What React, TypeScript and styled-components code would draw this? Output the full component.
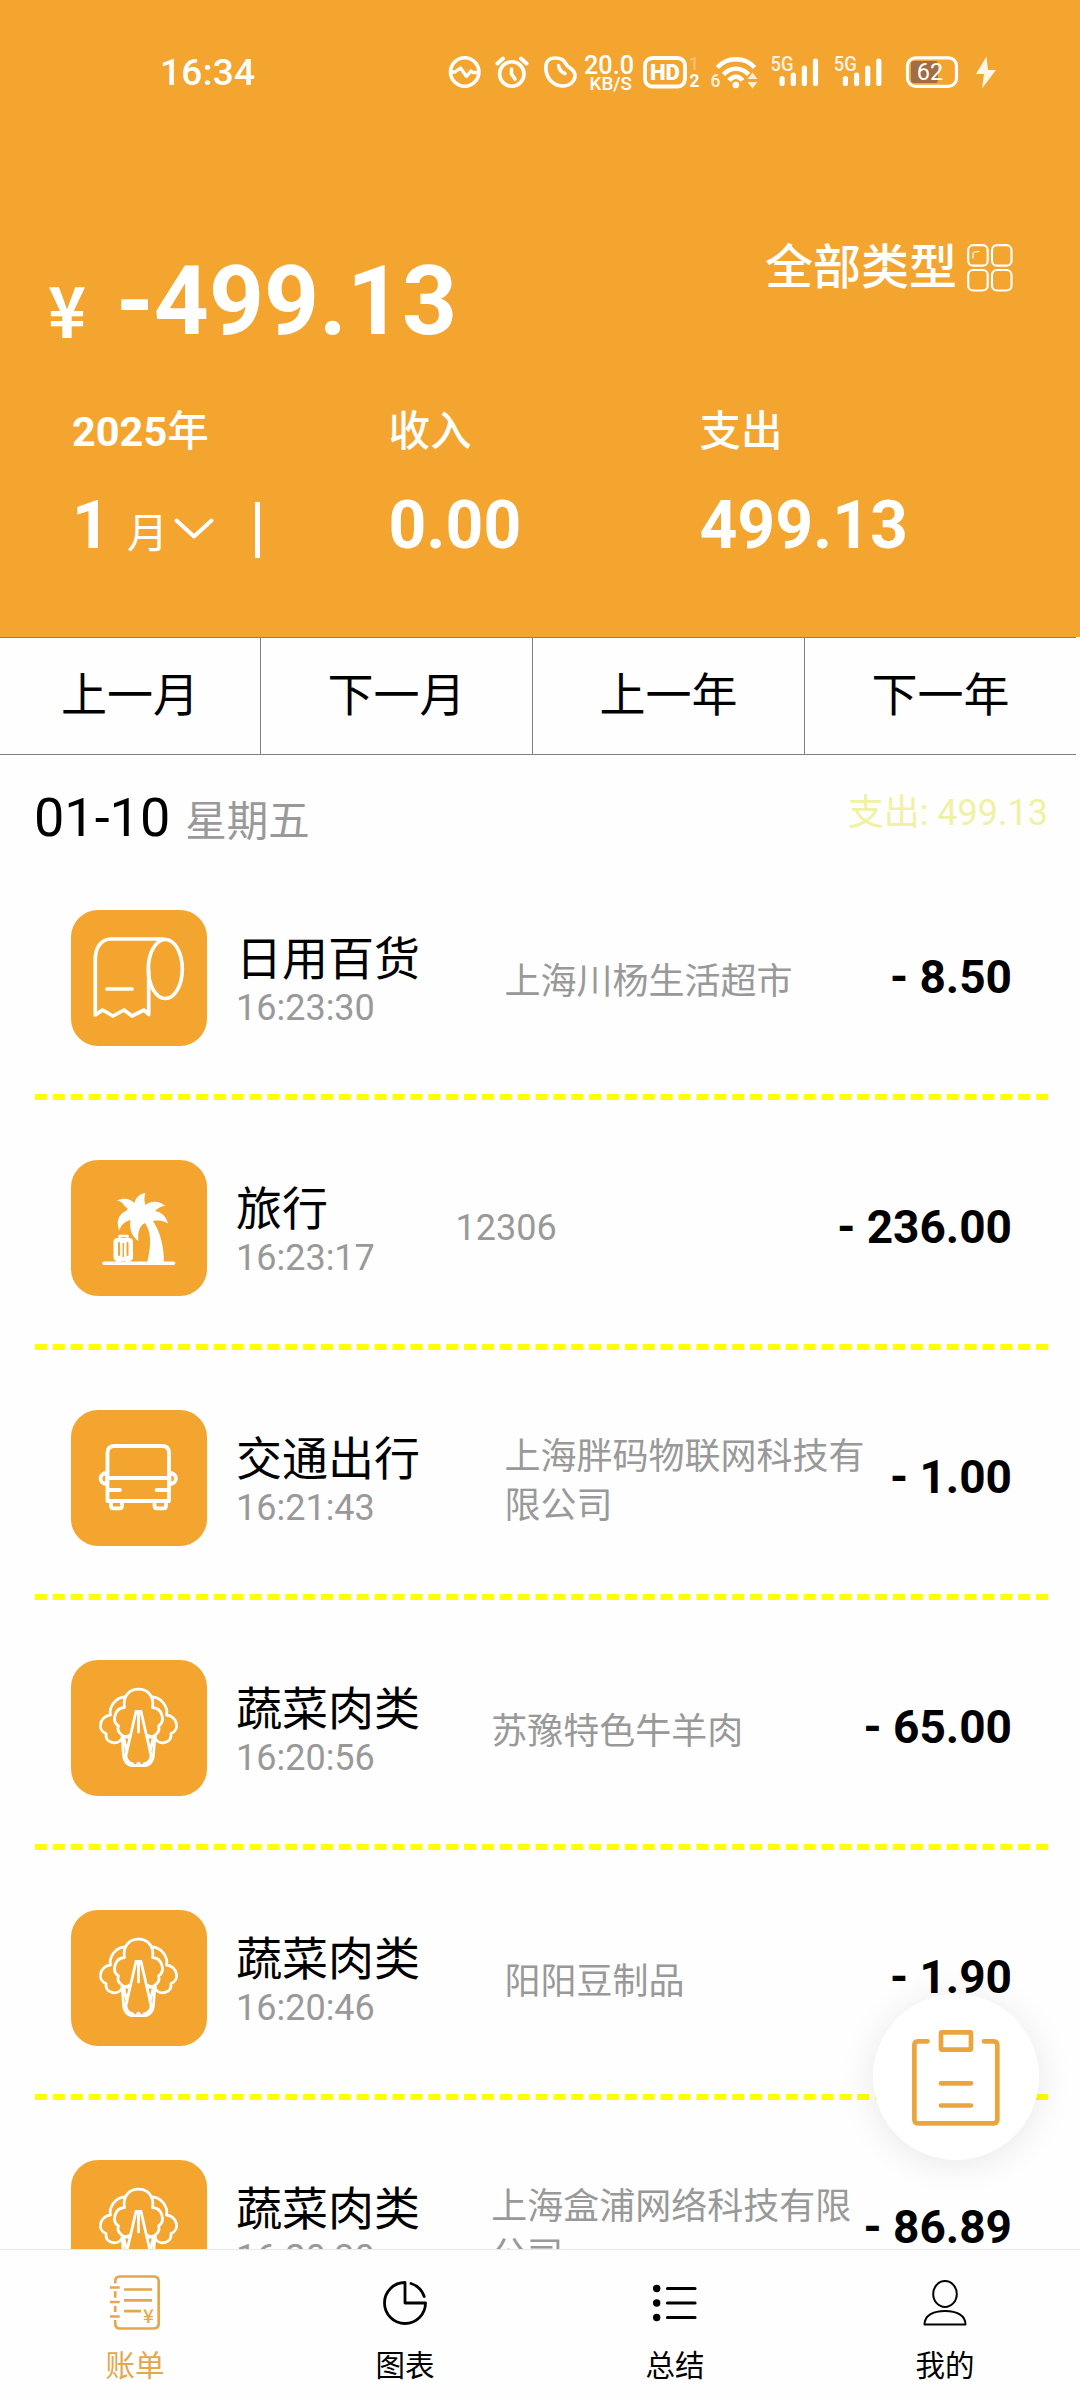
import React from "react";
import styled, { createGlobalStyle } from "styled-components";

const ORANGE = "#f4a52f";
const FONT = `Roboto, "Noto Sans CJK SC", sans-serif`;

const GlobalStyle = createGlobalStyle`
  * { box-sizing: border-box; }
  body { margin: 0; background: #fefefe; }
`;

const Screen = styled.div`
  width: 1080px;
  height: 2400px;
  display: flex;
  flex-direction: column;
  overflow: hidden;
  background: #fefefe;
  color: #000;
  font-family: ${FONT};
  position: relative;
`;

const Header = styled.header`
  height: 637px;
  flex: none;
  background: ${ORANGE};
  color: #fff;
`;

const StatusBar = styled.div`
  height: 144px;
  display: flex;
  align-items: center;
  padding: 0 84px 0 160px;
`;

const Clock = styled.span`
  flex: 1;
  padding-top: 1px;
  font-size: 37px;
  line-height: 40px;
  letter-spacing: 0.3px;
  font-weight: 500;
`;

const StatusIcons = styled.svg`
  display: block;
  width: 556px;
  height: 60px;
  font-family: ${FONT};
`;

const TopRow = styled.div`
  height: 260px;
  padding: 96px 67px 0 48px;
  display: flex;
  justify-content: space-between;
  align-items: flex-start;
`;

const Balance = styled.div`
  display: flex;
  align-items: flex-start;
  padding-top: 5px;
  font-weight: 700;
`;

const Currency = styled.span`
  width: 68px;
  padding-top: 13px;
  font-family: "Noto Sans CJK SC", sans-serif;
  font-size: 70px;
  line-height: 100px;
  transform: scaleX(0.92);
  transform-origin: left;
`;

const BalanceValue = styled.span`
  font-size: 96px;
  line-height: 112px;
`;

const TypeFilter = styled.div`
  display: flex;
  align-items: center;
  gap: 10px;
  font-size: 48px;
  line-height: 56px;
  font-weight: 500;
`;

const Stats = styled.div`
  display: grid;
  grid-template-columns: 316.5px 311px 1fr;
  padding-left: 72px;
`;

const Stat = styled.div`
  display: flex;
  flex-direction: column;
  gap: 26px;
`;

const StatLabel = styled.div<{ $bold?: boolean }>`
  font-size: 41.5px;
  line-height: 56px;
  font-weight: ${(p) => (p.$bold ? 700 : 500)};
`;

const Medium = styled.span`
  font-weight: 500;
`;

const StatValue = styled.div`
  display: flex;
  align-items: baseline;
  font-size: 66px;
  line-height: 80px;
  font-weight: 700;
`;

const MonthUnit = styled.span`
  margin-left: 17px;
  margin-right: 6px;
  font-size: 41px;
  font-weight: 400;
`;

const ChevronIcon = styled.svg`
  width: 40px;
  height: 24px;
  align-self: center;
  margin-bottom: 2px;
`;

const Divider = styled.i`
  width: 5px;
  height: 56px;
  margin-left: 41px;
  align-self: center;
  margin-bottom: 1px;
  background: #fff;
`;

const PeriodNav = styled.nav`
  width: 1076px;
  height: 118px;
  flex: none;
  display: grid;
  grid-template-columns: 261px 272px 272px 271px;
  border-top: 1px solid #808080;
  border-bottom: 1px solid #808080;
`;

const PeriodButton = styled.button`
  border: 0;
  border-right: 1px solid #808080;
  background: transparent;
  padding: 0 0 3px;
  color: #000;
  font-family: ${FONT};
  font-size: 46px;
  line-height: 56px;
  &:last-child { border-right: 0; }
`;

const DayHeader = styled.div`
  height: 95px;
  flex: none;
  padding: 31px 32px 0 34px;
  display: flex;
  justify-content: space-between;
  align-items: flex-start;
`;

const DayDate = styled.div`
  display: flex;
  align-items: baseline;
  gap: 15px;
  font-size: 54px;
  line-height: 64px;
`;

const Weekday = styled.span`
  font-size: 41.5px;
  color: #999;
`;

const DayTotal = styled.div`
  margin-top: 6px;
  font-size: 36px;
  line-height: 42px;
  color: #f1f1a3;
`;

const List = styled.div`
  flex: 1;
  min-height: 0;
  overflow: hidden;
  padding: 0 32px 0 35px;
`;

const Row = styled.div`
  height: 250px;
  padding: 60px 36px 48px;
  display: flex;
  justify-content: space-between;
  align-items: center;
  border-bottom: 6px dashed #ff0;
`;

const RowLead = styled.div`
  display: flex;
  align-items: center;
  padding-right: 59px;
`;

const Tile = styled.div`
  width: 136px;
  height: 136px;
  border-radius: 27px;
  background: ${ORANGE};
  margin-right: 29px;
  svg { display: block; }
`;

const Caption = styled.div`
  padding-top: 5px;
`;

const Title = styled.div`
  font-size: 46px;
  line-height: 54px;
  padding-bottom: 1px;
  white-space: nowrap;
`;

const Time = styled.div`
  font-size: 36px;
  line-height: 42px;
  color: #999;
`;

const Merchant = styled.div<{ $latin: boolean }>`
  width: 360px;
  flex: none;
  padding-top: ${(p) => (p.$latin ? 0 : 8)}px;
  font-size: 36px;
  line-height: 49px;
  color: #999;
  word-break: break-all;
`;

const Amount = styled.div`
  padding-bottom: 2px;
  font-size: 46px;
  line-height: 54px;
  font-weight: 700;
  white-space: nowrap;
`;

const Fab = styled.button`
  position: absolute;
  left: 873px;
  top: 1994px;
  width: 166px;
  height: 166px;
  padding: 0;
  border: 0;
  border-radius: 50%;
  background: #fff;
  box-shadow: 0 4px 36px rgba(0, 0, 0, 0.09);
  svg { display: block; }
`;

const TabBar = styled.nav`
  height: 151px;
  flex: none;
  display: grid;
  grid-template-columns: repeat(4, 1fr);
  border-top: 1px solid #e8e8e8;
  background: #fefefe;
`;

const Tab = styled.div<{ $active?: boolean }>`
  display: flex;
  flex-direction: column;
  align-items: center;
  padding-top: 23px;
  color: ${(p) => (p.$active ? "#e6a64a" : "#000")};
  font-size: 29.5px;
  line-height: 36px;
`;

const TabIcon = styled.div`
  height: 60px;
  display: flex;
  align-items: center;
  margin-bottom: 15px;
`;

const stroke = (width: number, color = "#fff") => ({
  fill: "none",
  stroke: color,
  strokeWidth: width,
  strokeLinecap: "round" as const,
  strokeLinejoin: "round" as const,
});

const Signal = ({ x }: { x: number }) => (
  <g transform={`translate(${x} 0)`}>
    <text x="0" y="18.5" fontSize="20" fontWeight="500" textLength="23" lengthAdjust="spacingAndGlyphs" opacity=".85">5G</text>
    <g {...stroke(5.2)}>
      <path d="M11.6 26.5V31.5M22.8 23V31.5M33.9 16V31.5M45 9V31.5" />
    </g>
  </g>
);

// Network, alarm, speed, signal and battery indicators.
const StatusDrawing = () => (
  <StatusIcons viewBox="0 -10 556 60" fill="#fff">
    <g {...stroke(3.6)}>
      <circle cx="24.7" cy="20" r="14.2" />
      <path d="M11 20H15L20.5 16L26.5 24.5L31 19L33 20.5H38" strokeWidth="3.3" />
      <circle cx="71.8" cy="22" r="12.2" />
      <path d="M57.5 11.5L63 6.5M86.5 11.5L81 6.5" strokeWidth="4" />
      <path d="M71.5 17V22L75 27" />
      <path d="M114 6C107 6.500 105 12 106 19C108 28 114 33.500 122 34C130 34.500 135 29 135 23.500C135 18 131 17 127.500 14C124.500 11 124.500 5.500 114 6Z" />
      <path d="M118.500 13.500C119 17 121 20 125 21.500" />
    </g>
    <text x="144" y="21.800" fontSize="25" fontWeight="500" textLength="50" lengthAdjust="spacingAndGlyphs">20.0</text>
    <text x="149.500" y="38.300" fontSize="18" fontWeight="500" textLength="42.500" lengthAdjust="spacingAndGlyphs">KB/S</text>
    <rect x="205" y="6" width="40" height="28.500" rx="7.500" {...stroke(3.800)} />
    <text x="210" y="28.200" fontSize="22.500" fontWeight="900" textLength="30" lengthAdjust="spacingAndGlyphs">HD</text>
    <text x="249" y="17.500" fontSize="17.500" fontWeight="500" opacity=".3">1</text>
    <text x="249.500" y="35" fontSize="17.500" fontWeight="700">2</text>
    <text x="270.500" y="35" fontSize="17.500" fontWeight="500" opacity=".85">6</text>
    <g {...stroke(4.600)} strokeLinecap="butt">
      <path d="M277.500 15.500C287 4.500 305 4.500 314.500 15.500" />
      <path d="M283.500 22.500C290 14.800 302 14.800 308.500 22.500" />
      <path d="M289 28.500C293 23.500 299 23.500 302.500 28.500" />
    </g>
    <circle cx="295.800" cy="33" r="3.300" />
    <path d="M307.500 27L312.500 20.500L317.500 27ZM307.500 30L312.500 36.500L317.500 30Z" opacity=".8" />
    <Signal x={330.5} />
    <Signal x={393.8} />
    <rect x="471" y="9" width="27" height="22" rx="3" fill="#a36c42" />
    <rect x="467.500" y="5.800" width="49" height="28.500" rx="8" {...stroke(3.200)} />
    <text x="490" y="28.300" fontSize="23.500" textAnchor="middle">62</text>
    <path d="M546.500 4.500L536 22H544L542 36.500L556 18H548Z" opacity=".9" />
  </StatusIcons>
);

const GridIcon = () => (
  <svg width="46" height="48" viewBox="0 0 46 48" {...stroke(2.2)}>
    <rect x="1.200" y="1.200" width="19.500" height="20.500" rx="5" />
    <rect x="25" y="1.200" width="19.500" height="20.500" rx="5" />
    <rect x="1.200" y="26" width="19.500" height="20.500" rx="5" />
    <rect x="25" y="26" width="19.500" height="20.500" rx="5" />
    <path d="M6 14V10Q6 7.500 12 7.500" strokeWidth="1.200" />
  </svg>
);

const PaperRollIcon = () => (
  <svg width="136" height="136" viewBox="0 0 136 136" {...stroke(3.700)}>
    <path d="M93 29H40C30 29 24.300 38 24.300 49V105L31.500 100L42 106L53 100L61 106L73 100L77.700 104.500V60" />
    <ellipse cx="94.300" cy="59" rx="17" ry="29.500" />
    <path d="M36 79H61" />
  </svg>
);

const TravelIcon = () => (
  <svg width="136" height="136" viewBox="0 0 136 136" fill="#fff">
    <path d="M74.500 33C68 34 64.500 38 63.500 43C58 38 52 38 46 40.500C50 41 52 43 54 46.500C58 49 57 50 53 52C46 56 45.500 64 48.500 70.500C50 65 53 62 59.500 60C58 69 61 77 67.500 81C66.500 73 68 66 74 63C82 74 79 91 76 103H93C93 88 90 73 82 61C88 60 93 61 97 63.500C95 56 90 52 84 51C87 48 90 46 94.500 46C88 40.500 80 40.500 74.500 45C73 41 73 37 74.500 33Z" />
    <path d="M33 103.300H102.500" {...stroke(3.600)} />
    <path d="M48.500 79V76H56.500V79" {...stroke(2.400)} />
    <rect x="42.500" y="78" width="19.500" height="23" rx="4" />
    <circle cx="47.500" cy="101" r="2.500" />
    <circle cx="57" cy="101" r="2.500" />
    <path d="M48 83V95M56.500 83V95" stroke={ORANGE} strokeWidth="2" strokeLinecap="round" />
    <path d="M52.300 83V97" stroke={ORANGE} strokeWidth="1.400" />
  </svg>
);

const BusIcon = () => (
  <svg width="136" height="136" viewBox="0 0 136 136" {...stroke(3.800)}>
    <path d="M36.500 91V43Q36.500 36 43.500 36H91Q98 36 98 43V91Z" />
    <path d="M36.500 68H98M38 80H49M85.500 80H97" />
    <path d="M36 63C27.500 63 27.500 74 36 74V63M98.500 63C107 63 107 74 98.500 74V63" />
    <path d="M40 92V96Q40 98.300 42.500 98.300H48.500Q51 98.300 51 96V92M83.500 92V96Q83.500 98.300 86 98.300H92.500Q95 98.300 95 96V92" />
  </svg>
);

const CabbageIcon = () => (
  <svg width="136" height="136" viewBox="0 0 136 136" {...stroke(2.800)}>
    <path d="M53.500 47.500C49 23 86 23 81.500 47.500C91 48 95 61 87.500 66C90 72 82 79 77.500 75.500M53.500 47.500C44 48 40 61 47.500 66C45 72 53 79 57.500 75.500" />
    <path d="M54 37C45 37 37.500 47 39.500 55C29 56 25.500 70 35 73.500C34 83 46 86 50.500 79M81 37C90 37 97.500 47 95.500 55C106 56 109.500 70 100 73.500C101 83 89 86 84.500 79" />
    <path d="M51 77H57.500M77.500 77H84.500M51.200 77L52.500 95C53 102 57 105.600 62 105.600H73C78 105.600 82 102 82.500 95L83.800 77" />
    <path d="M65 51.500L55 95C54.500 99 58 103.500 62 104M70 51.500L80 95C80.500 99 77 103.500 73 104M65 51.500H70M67.500 53V72M53 79L56 92M82 79L79 92" />
    <circle cx="67.500" cy="104" r=".8" />
  </svg>
);

const ClipboardIcon = () => (
  <svg width="166" height="166" viewBox="0 0 166 166" {...stroke(4.700, "#eaa63c")}>
    <path d="M54.500 47.300H45Q41.400 47.300 41.400 51V125.500Q41.400 129.300 45 129.300H120.700Q124.300 129.300 124.300 125.500V51Q124.300 47.300 120.700 47.300H111" />
    <rect x="68" y="38.300" width="30" height="17.300" rx="1" />
    <path d="M68 89.300H98M68 111.500H98" />
  </svg>
);

const LedgerTabIcon = () => (
  <svg width="50" height="56" viewBox="0 0 50 56" {...stroke(2.700, "#e6a64a")} strokeLinecap="butt">
    <path d="M5.200 8.500V6.500Q5.200 1.500 10 1.500H43.500Q48.700 1.500 48.700 6.500V48.500Q48.700 53.500 43.500 53.500H10Q5.200 53.500 5.200 48.500V45" />
    <path d="M5.200 16.300V22.700M5.200 31V37M0 12.500H9.700M0 27H9.700M0 41.500H9.700M14 14.500H42M14 25.300H42M14 36.200H31" />
    <text x="38.500" y="48.300" fontSize="19" fontWeight="500" textAnchor="middle" fill="#e6a64a" stroke="none" fontFamily='"Noto Sans CJK SC", sans-serif'>¥</text>
  </svg>
);

const ChartTabIcon = () => (
  <svg width="44" height="44" viewBox="0 0 44 44" {...stroke(2.800, "#000")}>
    <path d="M22 1.500A20.500 20.500 0 1 0 42.500 22H22Z" />
    <path d="M28 2.500A20.500 20.500 0 0 1 41.200 15.500" />
  </svg>
);

const SummaryTabIcon = () => (
  <svg width="44" height="40" viewBox="0 0 44 40" {...stroke(3.200, "#000")}>
    <path d="M14.500 5.500H42M14.500 20H42M14.500 34.500H42" />
    <g fill="#000" stroke="none">
      <circle cx="3.700" cy="5.500" r="3.700" />
      <circle cx="3.700" cy="20" r="3.700" />
      <circle cx="3.700" cy="34.500" r="3.700" />
    </g>
  </svg>
);

const ProfileTabIcon = () => (
  <svg width="44" height="46" viewBox="0 0 44 46" {...stroke(2, "#000")}>
    <ellipse cx="22" cy="14" rx="11.800" ry="13" />
    <path d="M1.500 44.500C1.500 35.500 10 31 22 31S42.500 35.500 42.500 44.500Z" />
  </svg>
);

const records = [
  { icon: <PaperRollIcon />, title: "日用百货", time: "16:23:30", merchant: "上海川杨生活超市", amount: "8.50" },
  { icon: <TravelIcon />, title: "旅行", time: "16:23:17", merchant: "12306", amount: "236.00" },
  { icon: <BusIcon />, title: "交通出行", time: "16:21:43", merchant: "上海胖码物联网科技有限公司", amount: "1.00" },
  { icon: <CabbageIcon />, title: "蔬菜肉类", time: "16:20:56", merchant: "苏豫特色牛羊肉", amount: "65.00" },
  { icon: <CabbageIcon />, title: "蔬菜肉类", time: "16:20:46", merchant: "阳阳豆制品", amount: "1.90" },
  { icon: <CabbageIcon />, title: "蔬菜肉类", time: "16:20:30", merchant: "上海盒浦网络科技有限公司", amount: "86.89" },
];

const tabs = [
  { icon: <LedgerTabIcon />, label: "账单", active: true },
  { icon: <ChartTabIcon />, label: "图表" },
  { icon: <SummaryTabIcon />, label: "总结" },
  { icon: <ProfileTabIcon />, label: "我的" },
];

export default function App() {
  return (
    <Screen lang="zh-CN">
      <GlobalStyle />
      <Header>
        <StatusBar>
          <Clock>16:34</Clock>
          <StatusDrawing />
        </StatusBar>
        <TopRow>
          <Balance>
            <Currency>¥</Currency>
            <BalanceValue>-499.13</BalanceValue>
          </Balance>
          <TypeFilter>
            全部类型
            <GridIcon />
          </TypeFilter>
        </TopRow>
        <Stats>
          <Stat>
            <StatLabel $bold>2025<Medium>年</Medium></StatLabel>
            <StatValue>
              1
              <MonthUnit>月</MonthUnit>
              <ChevronIcon viewBox="0 0 40 24" {...stroke(4)}>
                <path d="M2.500 3.500L20 19.500L37.500 3.500" />
              </ChevronIcon>
              <Divider />
            </StatValue>
          </Stat>
          <Stat>
            <StatLabel>收入</StatLabel>
            <StatValue>0.00</StatValue>
          </Stat>
          <Stat>
            <StatLabel>支出</StatLabel>
            <StatValue>499.13</StatValue>
          </Stat>
        </Stats>
      </Header>
      <PeriodNav>
        {["上一月", "下一月", "上一年", "下一年"].map((label) => (
          <PeriodButton key={label}>{label}</PeriodButton>
        ))}
      </PeriodNav>
      <DayHeader>
        <DayDate>
          01-10
          <Weekday>星期五</Weekday>
        </DayDate>
        <DayTotal>支出: 499.13</DayTotal>
      </DayHeader>
      <List>
        {records.map((r) => (
          <Row key={r.time}>
            <RowLead>
              <Tile>{r.icon}</Tile>
              <Caption>
                <Title>{r.title}</Title>
                <Time>{r.time}</Time>
              </Caption>
            </RowLead>
            <Merchant $latin={/^[\x20-\x7e]+$/.test(r.merchant)}>{r.merchant}</Merchant>
            <Amount>- {r.amount}</Amount>
          </Row>
        ))}
      </List>
      <TabBar>
        {tabs.map((t) => (
          <Tab key={t.label} $active={t.active}>
            <TabIcon>{t.icon}</TabIcon>
            {t.label}
          </Tab>
        ))}
      </TabBar>
      <Fab aria-label="记一笔">
        <ClipboardIcon />
      </Fab>
    </Screen>
  );
}
